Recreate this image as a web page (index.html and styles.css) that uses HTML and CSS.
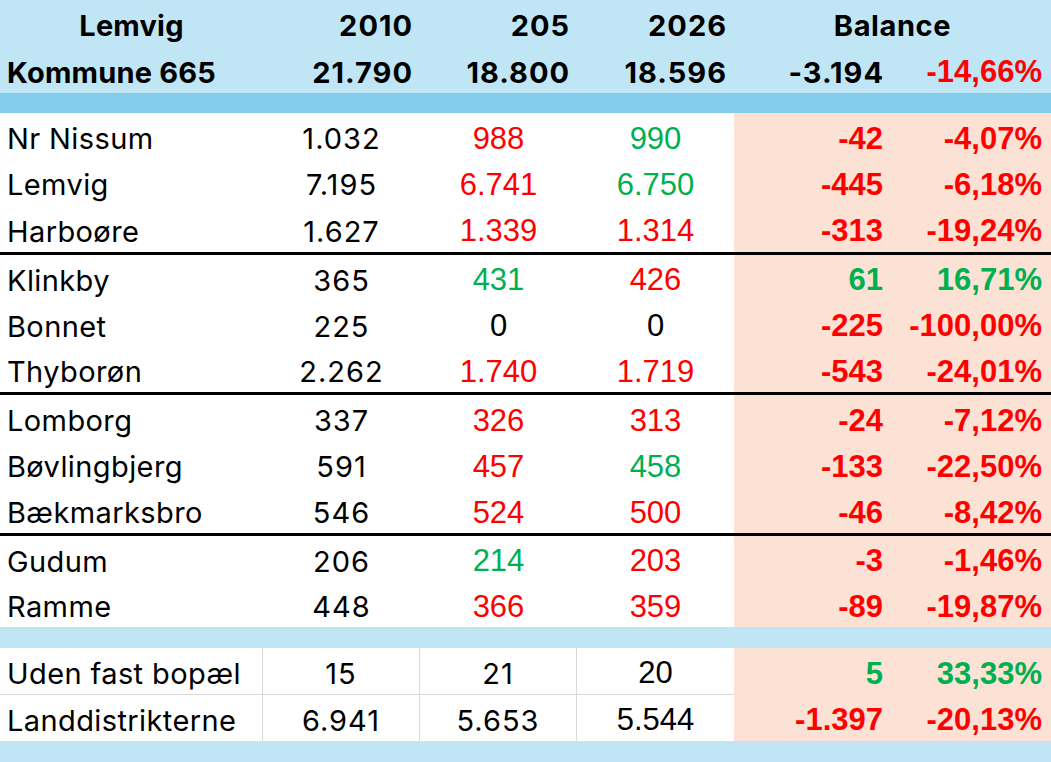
FILE: index.html
```html
<!DOCTYPE html>
<html lang="da">
<head>
<meta charset="utf-8">
<title>Lemvig Kommune</title>
<link rel="stylesheet" href="styles.css">
</head>
<body>
<div class="sheet">
  <div class="row head">
    <div class="c name center">Lemvig</div>
    <div class="c num-r">2010</div>
    <div class="c num-r">205</div>
    <div class="c num-r">2026</div>
    <div class="c span2 center">Balance</div>
  </div>
  <div class="row head">
    <div class="c name">Kommune 665</div>
    <div class="c num-r">21.790</div>
    <div class="c num-r">18.800</div>
    <div class="c num-r">18.596</div>
    <div class="c num-r">-3.194</div>
    <div class="c num-r arialb red">-14,66%</div>
  </div>
  <div class="band dark"></div>

  <div class="group g1">
    <div class="row data">
      <div class="c name">Nr Nissum</div><div class="c v2">1.032</div><div class="c v red">988</div><div class="c v green">990</div><div class="c bal red">-42</div><div class="c bal red">-4,07%</div>
    </div>
    <div class="row data">
      <div class="c name">Lemvig</div><div class="c v2">7.195</div><div class="c v red">6.741</div><div class="c v green">6.750</div><div class="c bal red">-445</div><div class="c bal red">-6,18%</div>
    </div>
    <div class="row data">
      <div class="c name">Harboøre</div><div class="c v2">1.627</div><div class="c v red">1.339</div><div class="c v red">1.314</div><div class="c bal red">-313</div><div class="c bal red">-19,24%</div>
    </div>
  </div>

  <div class="group g2">
    <div class="row data">
      <div class="c name">Klinkby</div><div class="c v2">365</div><div class="c v green">431</div><div class="c v red">426</div><div class="c bal green">61</div><div class="c bal green">16,71%</div>
    </div>
    <div class="row data">
      <div class="c name">Bonnet</div><div class="c v2">225</div><div class="c v">0</div><div class="c v">0</div><div class="c bal red">-225</div><div class="c bal red">-100,00%</div>
    </div>
    <div class="row data">
      <div class="c name">Thyborøn</div><div class="c v2">2.262</div><div class="c v red">1.740</div><div class="c v red">1.719</div><div class="c bal red">-543</div><div class="c bal red">-24,01%</div>
    </div>
  </div>

  <div class="group g3">
    <div class="row data">
      <div class="c name">Lomborg</div><div class="c v2">337</div><div class="c v red">326</div><div class="c v red">313</div><div class="c bal red">-24</div><div class="c bal red">-7,12%</div>
    </div>
    <div class="row data">
      <div class="c name">Bøvlingbjerg</div><div class="c v2">591</div><div class="c v red">457</div><div class="c v green">458</div><div class="c bal red">-133</div><div class="c bal red">-22,50%</div>
    </div>
    <div class="row data">
      <div class="c name">Bækmarksbro</div><div class="c v2">546</div><div class="c v red">524</div><div class="c v red">500</div><div class="c bal red">-46</div><div class="c bal red">-8,42%</div>
    </div>
  </div>

  <div class="group g4">
    <div class="row data">
      <div class="c name">Gudum</div><div class="c v2">206</div><div class="c v green">214</div><div class="c v red">203</div><div class="c bal red">-3</div><div class="c bal red">-1,46%</div>
    </div>
    <div class="row data">
      <div class="c name">Ramme</div><div class="c v2">448</div><div class="c v red">366</div><div class="c v red">359</div><div class="c bal red">-89</div><div class="c bal red">-19,87%</div>
    </div>
  </div>

  <div class="band light"></div>

  <div class="group g5">
    <div class="row data grid">
      <div class="c name">Uden fast bopæl</div><div class="c v2">15</div><div class="c v3">21</div><div class="c v">20</div><div class="c bal green">5</div><div class="c bal green">33,33%</div>
    </div>
    <div class="row data grid">
      <div class="c name">Landdistrikterne</div><div class="c v2">6.941</div><div class="c v3">5.653</div><div class="c v">5.544</div><div class="c bal red">-1.397</div><div class="c bal red">-20,13%</div>
    </div>
  </div>

  <div class="band light end"></div>
</div>
</body>
</html>
```

FILE: styles.css
```css
html, body {
  margin: 0;
  padding: 0;
  background: #ffffff;
}

.sheet {
  width: 1051px;
  height: 762px;
  overflow: hidden;
  font-family: "Inter", "Liberation Sans", sans-serif;
  color: #000000;
}

.row {
  display: grid;
  grid-template-columns: 263px 157px 157px 157px 157px 160px;
}

.c {
  display: flex;
  align-items: center;
  padding-top: 5px;
  box-sizing: border-box;
  white-space: nowrap;
  overflow: visible;
}

.head {
  height: 46.5px;
  background: #c0e6f5;
  font-weight: 700;
  font-size: 29px;
}

.head .name {
  padding-left: 7px;
  letter-spacing: 0.2px;
}

.center {
  justify-content: center;
}

.head .name.center {
  padding-left: 0;
}

.num-r {
  justify-content: flex-end;
  padding-right: 7px;
  letter-spacing: 1px;
}

.head .span2 {
  letter-spacing: 0.6px;
}

.span2 {
  grid-column: span 2;
}

.arialb {
  font-family: "Liberation Sans", Arial, sans-serif;
  font-size: 31px;
  letter-spacing: 0;
  padding-right: 9px;
}

.band {
  height: 20px;
}

.band.dark {
  background: #83ccea;
}

.band.light {
  background: #c0e6f5;
  height: 21px;
}

.band.end {
  height: 21px;
}

.group {
  display: flex;
  flex-direction: column;
}

.g1 { height: 142px; border-bottom: 3px solid #000; box-sizing: border-box; }
.g2 { height: 140px; border-bottom: 3px solid #000; box-sizing: border-box; }
.g3 { height: 141px; border-bottom: 3px solid #000; box-sizing: border-box; }
.g4 { height: 91px; }
.g5 { height: 93px; }

.data {
  flex: 1;
}

.data .name {
  padding-left: 7px;
  font-size: 29px;
  letter-spacing: 0.4px;
}

.data .v2,
.data .v3 {
  justify-content: center;
  font-size: 29px;
  letter-spacing: 1px;
}

.data .v {
  justify-content: center;
  font-family: "Liberation Sans", Arial, sans-serif;
  font-size: 31px;
}

.data .bal {
  justify-content: flex-end;
  background: #fbe2d5;
  font-family: "Liberation Sans", Arial, sans-serif;
  font-weight: 700;
  font-size: 31px;
  padding-right: 8px;
}

.data .bal:last-child {
  padding-right: 9px;
}

.grid .name,
.grid .v2,
.grid .v3 {
  border-right: 1px solid #d9d9d9;
}

.grid:first-child .name,
.grid:first-child .v2,
.grid:first-child .v3,
.grid:first-child .v {
  border-bottom: 1px solid #d9d9d9;
}

.red { color: #ff0000; }
.green { color: #00b050; }
```
